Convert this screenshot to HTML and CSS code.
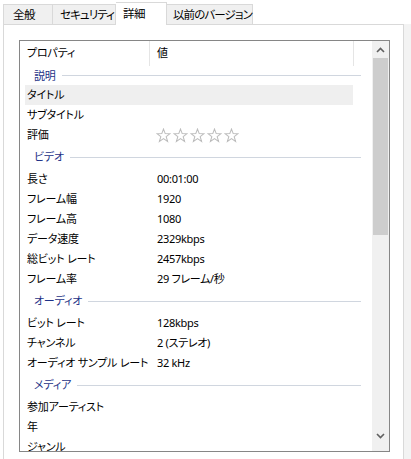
FILE: index.html
```html
<!DOCTYPE html>
<html lang="ja">
<head>
<meta charset="utf-8">
<link rel="stylesheet" href="styles.css">
</head>
<body>
<div class="tabs">
  <div class="tab t1">全般</div>
  <div class="tab t2">セキュリティ</div>
  <div class="tab sel">詳細</div>
  <div class="tab t4">以前のバージョン</div>
</div>
<div class="panel">
  <div class="list">
    <div class="content">
      <div class="header">
        <div class="hcell c1">プロパティ</div>
        <div class="hcell c2">値</div>
      </div>
      <div class="group first"><span class="glabel">説明</span><span class="gline"></span></div>
      <div class="row hl"><span class="k">タイトル</span><span class="v"></span></div>
      <div class="row"><span class="k">サブタイトル</span><span class="v"></span></div>
      <div class="row"><span class="k">評価</span><span class="v stars">
        <svg class="star" viewBox="0 0 14 14"><path d="M7 1 L8.6 5.2 L13 5.3 L9.5 8.1 L10.8 12.5 L7 9.9 L3.2 12.5 L4.5 8.1 L1 5.3 L5.4 5.2 Z"/></svg>
        <svg class="star" viewBox="0 0 14 14"><path d="M7 1 L8.6 5.2 L13 5.3 L9.5 8.1 L10.8 12.5 L7 9.9 L3.2 12.5 L4.5 8.1 L1 5.3 L5.4 5.2 Z"/></svg>
        <svg class="star" viewBox="0 0 14 14"><path d="M7 1 L8.6 5.2 L13 5.3 L9.5 8.1 L10.8 12.5 L7 9.9 L3.2 12.5 L4.5 8.1 L1 5.3 L5.4 5.2 Z"/></svg>
        <svg class="star" viewBox="0 0 14 14"><path d="M7 1 L8.6 5.2 L13 5.3 L9.5 8.1 L10.8 12.5 L7 9.9 L3.2 12.5 L4.5 8.1 L1 5.3 L5.4 5.2 Z"/></svg>
        <svg class="star" viewBox="0 0 14 14"><path d="M7 1 L8.6 5.2 L13 5.3 L9.5 8.1 L10.8 12.5 L7 9.9 L3.2 12.5 L4.5 8.1 L1 5.3 L5.4 5.2 Z"/></svg>
      </span></div>
      <div class="group"><span class="glabel">ビデオ</span><span class="gline"></span></div>
      <div class="row"><span class="k">長さ</span><span class="v">00:01:00</span></div>
      <div class="row"><span class="k">フレーム幅</span><span class="v">1920</span></div>
      <div class="row"><span class="k">フレーム高</span><span class="v">1080</span></div>
      <div class="row"><span class="k">データ速度</span><span class="v">2329kbps</span></div>
      <div class="row"><span class="k">総ビット レート</span><span class="v">2457kbps</span></div>
      <div class="row"><span class="k">フレーム率</span><span class="v">29 フレーム/秒</span></div>
      <div class="group"><span class="glabel">オーディオ</span><span class="gline"></span></div>
      <div class="row"><span class="k">ビット レート</span><span class="v">128kbps</span></div>
      <div class="row"><span class="k">チャンネル</span><span class="v">2 (ステレオ)</span></div>
      <div class="row"><span class="k">オーディオ サンプル レート</span><span class="v">32 kHz</span></div>
      <div class="group"><span class="glabel">メディア</span><span class="gline"></span></div>
      <div class="row"><span class="k">参加アーティスト</span><span class="v"></span></div>
      <div class="row"><span class="k">年</span><span class="v"></span></div>
      <div class="row"><span class="k">ジャンル</span><span class="v"></span></div>
    </div>
    <div class="scrollbar">
      <div class="arrow up"><svg viewBox="0 0 9 6"><path d="M1 5 L4.5 1.5 L8 5"/></svg></div>
      <div class="track"><div class="thumb"></div></div>
      <div class="arrow down"><svg viewBox="0 0 9 6"><path d="M1 1 L4.5 4.5 L8 1"/></svg></div>
    </div>
  </div>
</div>
</body>
</html>
```

FILE: styles.css
```css
html, body {
  margin: 0;
  padding: 0;
  background: #ffffff;
}
body {
  width: 411px;
  height: 459px;
  overflow: hidden;
  font-family: "Noto Sans", "Noto Sans CJK JP", sans-serif;
  font-size: 11px;
  letter-spacing: -0.2px;
  font-feature-settings: "palt";
  color: #000;
  background: linear-gradient(to right, #ffffff 404px, #f3f3f3 404px);
}
.tabs {
  display: flex;
  align-items: flex-end;
  height: 24px;
  padding-left: 3px;
  background: #fff;
  position: relative;
  z-index: 1;
}
.tab {
  box-sizing: border-box;
  height: 20px;
  line-height: 19px;
  background: #f0f0f0;
  border: 1px solid #d9d9d9;
  border-bottom: none;
  padding-left: 8px;
  color: #000;
  white-space: nowrap;
  font-size: 11.5px;
  letter-spacing: -0.5px;
}
.t1 { width: 50px; padding-left: 9px; }
.t2 { width: 63px; border-left: none; padding-left: 7px; letter-spacing: -0.9px; }
.t4 { width: 86px; border-left: none; padding-left: 6px; letter-spacing: -0.9px; }
.tab.sel {
  width: 51px;
  height: 23px;
  line-height: 21px;
  background: #fff;
  border-color: #d9d9d9;
  border-left: none;
  padding-left: 7px;
  margin-bottom: -1px;
}
.panel {
  box-sizing: border-box;
  margin-left: 3px;
  width: 401px;
  height: 440px;
  border: 1px solid #d9d9d9;
  border-bottom: none;
  padding: 15px 0 0 15px;
  background: #fff;
}
.list {
  box-sizing: border-box;
  width: 371px;
  height: 412px;
  border: 1px solid #868686;
  display: flex;
  overflow: hidden;
}
.content {
  width: 352px;
  overflow: hidden;
}
.header {
  display: flex;
  height: 25px;
}
.hcell {
  box-sizing: border-box;
  padding-left: 7px;
  line-height: 24px;
}
.hcell.c1 {
  width: 130px;
  border-right: 1px solid #e5e5e5;
}
.hcell.c2 {
  width: 204px;
  padding-left: 7px;
  border-right: 1px solid #e5e5e5;
}
.group {
  display: flex;
  align-items: center;
  height: 24px;
  padding-left: 14px;
  margin-right: 11px;
  color: #1e3287;
}
.group.first {
  height: 19px;
}
.glabel {
  line-height: 16px;
}
.gline {
  flex: 1;
  height: 1px;
  background: #d0d6df;
  margin-left: 6px;
}
.row {
  display: flex;
  height: 20px;
  line-height: 20px;
  margin-left: 5px;
  width: 328px;
  padding-left: 2px;
  box-sizing: border-box;
}
.row.hl {
  background: #efefef;
}
.k {
  width: 130px;
  flex: none;
  white-space: nowrap;
}
.v {
  white-space: nowrap;
  letter-spacing: -0.3px;
}
.stars {
  display: flex;
  align-items: center;
  gap: 2px;
  margin-left: -1px;
}
.star {
  width: 15px;
  height: 15px;
  fill: none;
  stroke: #bdbdbd;
  stroke-width: 1;
}
.scrollbar {
  width: 17px;
  background: #f0f0f0;
  display: flex;
  flex-direction: column;
}
.arrow {
  height: 17px;
  display: flex;
  align-items: center;
  justify-content: center;
}
.arrow svg {
  width: 9px;
  height: 6px;
  fill: none;
  stroke: #606060;
  stroke-width: 1.6;
}
.track {
  flex: 1;
}
.thumb {
  margin-left: 1px;
  width: 15px;
  height: 177px;
  background: #cdcdcd;
}
.down {
  height: 22px;
  align-items: flex-start;
  padding-top: 4px;
  box-sizing: border-box;
}
```
